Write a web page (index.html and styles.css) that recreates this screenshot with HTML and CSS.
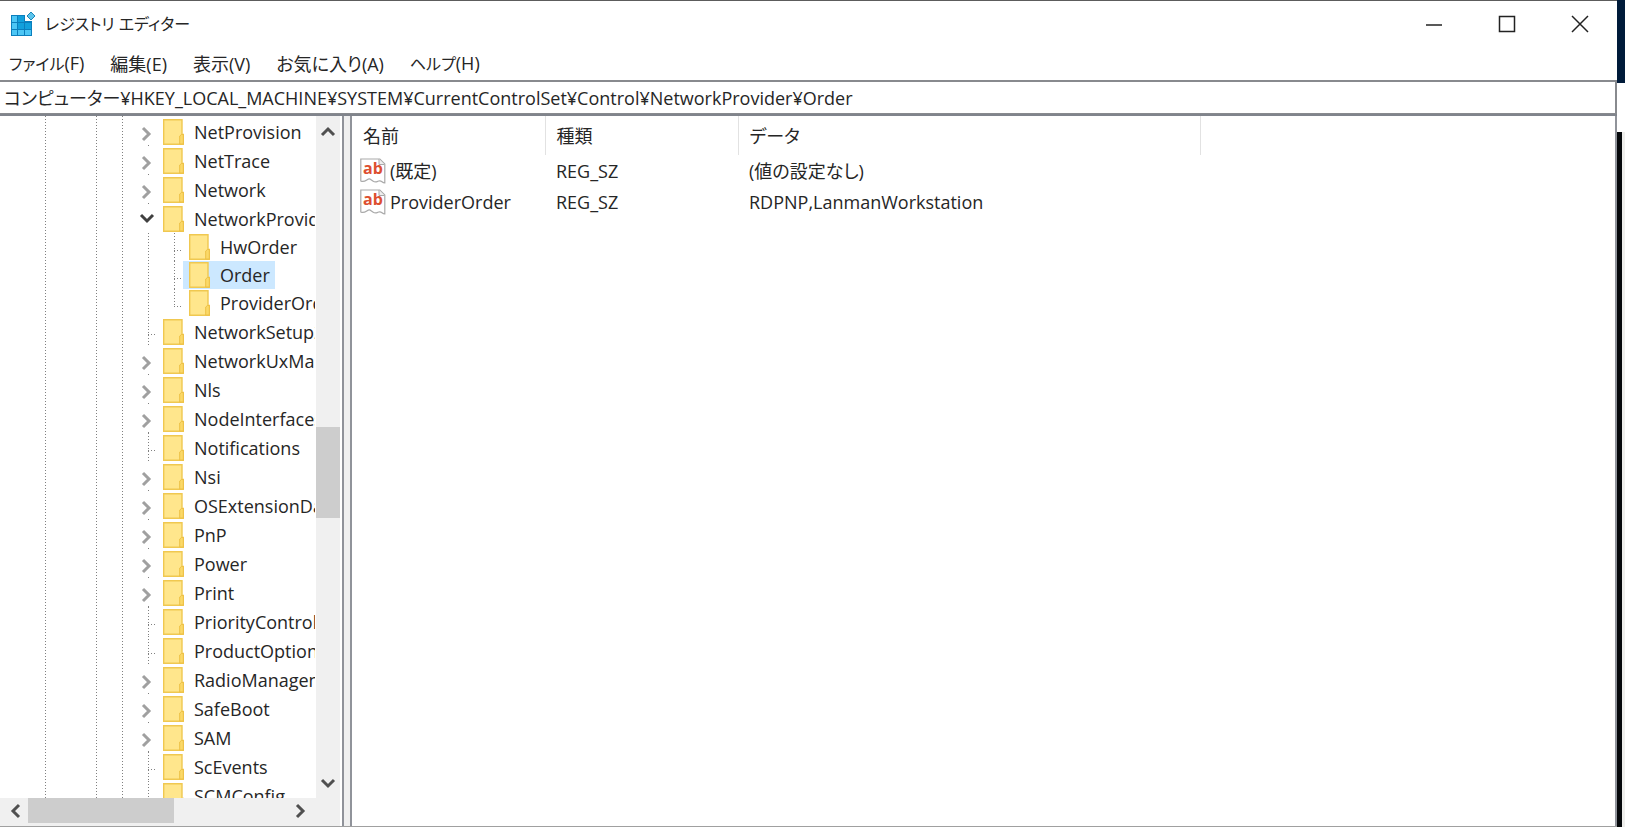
FILE: index.html
```
<!DOCTYPE html>
<html lang="ja">
<head>
    <meta charset="UTF-8">
    <meta name="viewport" content="width=device-width, initial-scale=1.0">
    <title>レジストリ エディター</title>
    <link rel="stylesheet" href="styles.css">
</head>
<body>
    <!-- shared icons -->
    <svg class="sprite" aria-hidden="true">
        <symbol id="folder" viewBox="0 0 21 26">
            <path d="M.7 .7H19V15.500H20.300V25.300H.7z" fill="#ffe68c" stroke="#f0c850" stroke-width="1.400"/>
            <path d="M16.700 25V17L18.500 15.500H20.300V25z" fill="#fbd968" stroke="#edc046"/>
        </symbol>
        <symbol id="chevron" viewBox="0 0 12 16">
            <path d="M2 2l6 6-6 6" fill="none" stroke="currentColor" stroke-width="3"/>
        </symbol>
        <symbol id="string-value" viewBox="0 0 26 26">
            <path d="M.8 23V1h19l5 5v19c-3 0-3-3-6-2s-3 2-6 0-3-3-6-1-4 2-6 1z" fill="#fff" stroke="#a9a9a9" stroke-width="1.200"/>
            <path d="M19 1v5.500h5.500" fill="#eee" stroke="#a9a9a9"/>
            <text x="3" y="16" class="icon-text">ab</text>
        </symbol>
    </svg>

    <main class="window">
        <header class="titlebar">
            <svg class="app-icon" viewBox="0 0 26 26" aria-hidden="true">
                <path d="M1 4h14v6h7v15H1z" fill="#0b7fbd"/>
                <path d="M2 5h5v6H2zM2 12h5v6H2zM2 19h5v5H2zM8 19h6v5H8zM15 19h6v5h-6z" fill="#4cc6f5"/>
                <path d="M8 5h6v6H8zM8 12h6v6H8zM15 12h6v6h-6z" fill="#12a0dc"/>
                <path d="M21 1l4 4-4 4-4-4z" fill="#5cc4ec" stroke="#1a86b8"/>
            </svg>
            <h1 class="title">レジストリ エディター</h1>
            <div class="window-buttons">
                <button type="button" aria-label="最小化"><svg viewBox="0 0 18 18"><path d="M1 10h16"/></svg></button>
                <button type="button" aria-label="最大化"><svg viewBox="0 0 18 18"><path d="M1.500 1.500h15v15h-15z"/></svg></button>
                <button type="button" aria-label="閉じる"><svg viewBox="0 0 18 18"><path d="M1 1l16 16M17 1L1 17"/></svg></button>
            </div>
        </header>

        <nav class="menubar">
            <button type="button"><span class="kana">ファイル</span>(F)</button>
            <button type="button">編集(E)</button>
            <button type="button">表示(V)</button>
            <button type="button">お気に入り(A)</button>
            <button type="button"><span class="kana">ヘルプ</span>(H)</button>
        </nav>

        <input class="address" type="text" aria-label="アドレス" value="コンピューター¥HKEY_LOCAL_MACHINE¥SYSTEM¥CurrentControlSet¥Control¥NetworkProvider¥Order">

        <div class="panes">
            <section class="tree-pane">
                <div class="tree-view">
                    <ul class="tree" id="tree"></ul>
                    <div class="scrollbar vertical">
                        <button type="button" aria-label="上へ"><svg class="up"><use href="#chevron"/></svg></button>
                        <div class="track"><div class="thumb"></div></div>
                        <button type="button" aria-label="下へ"><svg class="down"><use href="#chevron"/></svg></button>
                    </div>
                </div>
                <div class="scrollbar horizontal">
                    <button type="button" aria-label="左へ"><svg class="left"><use href="#chevron"/></svg></button>
                    <div class="track"><div class="thumb"></div></div>
                    <button type="button" aria-label="右へ"><svg><use href="#chevron"/></svg></button>
                </div>
            </section>

            <section class="value-pane">
                <table class="values">
                    <thead>
                        <tr>
                            <th class="col-name">名前</th>
                            <th class="col-type">種類</th>
                            <th class="col-data">データ</th>
                            <td></td>
                        </tr>
                    </thead>
                    <tbody>
                        <tr>
                            <td><span class="value-name"><svg><use href="#string-value"/></svg>(既定)</span></td>
                            <td>REG_SZ</td>
                            <td>(値の設定なし)</td>
                        </tr>
                        <tr>
                            <td><span class="value-name"><svg><use href="#string-value"/></svg>ProviderOrder</span></td>
                            <td>REG_SZ</td>
                            <td>RDPNP,LanmanWorkstation</td>
                        </tr>
                    </tbody>
                </table>
            </section>
        </div>
    </main>
    <div class="desktop">
        <div class="wallpaper"></div>
        <div class="other-window"></div>
    </div>

    <script src="script.js"></script>
</body>
</html>
```
FILE: styles.css
```
* {
    box-sizing: border-box;
}
body {
    margin: 0;
    height: 100vh;
    display: flex;
    overflow: hidden;
    background: #fff;
    color: #262626;
    font-family: "Open Sans", "Noto Sans CJK JP", sans-serif;
    font-size: 18px;
    line-height: 28px;
    font-feature-settings: "palt";
}
button, input {
    font: inherit;
    font-feature-settings: inherit;
    color: inherit;
    border: none;
    padding: 0;
    background: none;
}
.sprite {
    position: absolute;
    width: 0;
    height: 0;
}
.icon-text {
    font: bold 16px "Open Sans", sans-serif;
    fill: #dd5030;
}
.window {
    flex: 1;
    min-width: 0;
    display: flex;
    flex-direction: column;
    border-top: 1px solid #5c5c5c;
}

/* title bar */
.titlebar {
    display: flex;
    align-items: center;
    height: 46px;
    padding-left: 10px;
}
.app-icon {
    width: 26px;
    height: 26px;
    margin-right: 9px;
}
.title {
    margin: 0;
    font-size: 16px;
    font-weight: normal;
}
.window-buttons {
    display: flex;
    margin-left: auto;
    padding-right: 1px;
}
.window-buttons button {
    width: 73px;
    height: 46px;
    display: flex;
    align-items: center;
    justify-content: center;
}
.window-buttons svg {
    width: 18px;
    height: 18px;
    fill: none;
    stroke: #222;
    stroke-width: 1.5;
}
.menubar {
    display: flex;
    gap: 26px;
    height: 33px;
    padding-left: 9px;
}
.kana {
    font-size: 16px;
}
.address {
    height: 34px;
    padding: 0 4px 2px;
    border: solid #888a8e;
    border-width: 2px 2px 1px 0;
    outline: none;
}

/* panes */
.panes {
    flex: 1;
    min-height: 0;
    display: flex;
    border-top: 2px solid #80848c;
    border-bottom: 1px solid #a0a0a0;
    background: #f0f0f0;
}
.tree-pane {
    width: 344px;
    display: flex;
    flex-direction: column;
    border-right: 2px solid #90939a;
    padding-right: 2px;
    background: #fff;
}
.tree-view {
    flex: 1;
    min-height: 0;
    display: flex;
}
.tree, .branch {
    margin: 0;
    padding: 0;
    list-style: none;
}
.tree {
    flex: 1;
    min-width: 0;
    margin-right: 1px;
    padding-top: 1px;
    overflow: hidden;
    --dots: repeating-linear-gradient(#808080 0 1px, transparent 1px 3px);
    --dots-across: repeating-linear-gradient(90deg, #808080 0 1px, transparent 1px 3px);
    background: var(--dots) 45px 0 / 1px 100% no-repeat,
                var(--dots) 96px 0 / 1px 100% no-repeat,
                var(--dots) 122px 0 / 1px 100% no-repeat;
}
.row {
    display: flex;
    height: 29px;
    padding-left: 138px;
}
.branch {
    background: var(--dots) 148px 0 / 1px 100% no-repeat;
}
.branch .row {
    height: 28px;
    padding-left: 164px;
}
.toggle {
    flex: none;
    width: 19px;
    height: 29px;
    display: flex;
    align-items: center;
    justify-content: center;
    padding: 4px 1px 0 0;
    color: #a0a0a0;
    background: linear-gradient(#808080, #808080) 10px 100% / 1px 1px no-repeat;
}
.toggle svg {
    width: 12px;
    height: 16px;
}
.toggle.open {
    padding-top: 0;
    color: #404040;
    background: none;
}
.toggle.open svg {
    transform: rotate(90deg);
}
.leaf {
    flex: none;
    width: 19px;
    background: var(--dots) 10px 0 / 1px 100% no-repeat,
                var(--dots-across) 10px 17px / 9px 1px no-repeat;
}
.branch li:last-child .leaf {
    background-size: 1px 17px, 9px 1px;
}
.entry {
    display: flex;
    align-items: center;
    gap: 10px;
    padding: 0 5px 0 6px;
    white-space: nowrap;
}
.entry svg {
    flex: none;
    width: 21px;
    height: 26px;
}
.entry.selected {
    background: #cce8ff;
}

/* scrollbars */
.scrollbar {
    flex: none;
    display: flex;
    background: #f0f0f0;
}
.scrollbar button {
    flex: none;
    width: 25px;
    height: 25px;
    display: flex;
    align-items: center;
    justify-content: center;
    color: #505050;
}
.scrollbar svg {
    width: 12px;
    height: 16px;
}
.scrollbar .up {
    transform: rotate(-90deg);
}
.scrollbar .down {
    transform: rotate(90deg);
}
.scrollbar .left {
    transform: rotate(180deg);
}
.track {
    flex: 1;
}
.thumb {
    background: #cdcdcd;
}
.vertical {
    width: 24px;
    flex-direction: column;
    align-items: center;
    padding: 2px 0;
}
.vertical .track {
    width: 100%;
    padding-top: 284px;
}
.vertical .thumb {
    height: 91px;
}
.horizontal {
    height: 28px;
    padding: 0 26px 3px 1px;
}
.horizontal button {
    width: 27px;
}
.horizontal .thumb {
    width: 146px;
    height: 25px;
}

/* value list */
.value-pane {
    flex: 1;
    min-width: 0;
    margin-left: 6px;
    border: solid #90939a;
    border-width: 0 2px;
    background: #fff;
}
.values {
    width: 100%;
    table-layout: fixed;
    border-collapse: collapse;
}
.values th, .values td {
    padding: 0 0 0 11px;
    text-align: left;
    font-weight: normal;
    white-space: nowrap;
}
.values thead tr {
    height: 39px;
}
.values th {
    border-right: 1px solid #e2e2e2;
}
.values tbody tr {
    height: 31px;
}
.col-name {
    width: 193px;
}
.col-type {
    width: 193px;
}
.col-data {
    width: 462px;
}
.values tbody td:first-child {
    padding-left: 8px;
}
.value-name {
    display: flex;
    align-items: center;
    gap: 4px;
}
.value-name svg {
    width: 26px;
    height: 26px;
}

/* what shows to the right of the window */
.desktop {
    width: 8px;
    display: flex;
    flex-direction: column;
}
.wallpaper {
    height: 83px;
    background: #001b3a;
}
.other-window {
    flex: 1;
    margin-top: 49px;
    border-left: 5px solid #05080b;
    background: #eeeeec;
}
```
FILE: script.js
```
const keys = [
    { name: 'NetProvision', toggle: true },
    { name: 'NetTrace', toggle: true },
    { name: 'Network', toggle: true },
    { name: 'NetworkProvider', toggle: true, children: [
        { name: 'HwOrder' },
        { name: 'Order', selected: true },
        { name: 'ProviderOrder' }
    ] },
    { name: 'NetworkSetup2' },
    { name: 'NetworkUxManager', toggle: true },
    { name: 'Nls', toggle: true },
    { name: 'NodeInterfaces', toggle: true },
    { name: 'Notifications' },
    { name: 'Nsi', toggle: true },
    { name: 'OSExtensionDatabase', toggle: true },
    { name: 'PnP', toggle: true },
    { name: 'Power', toggle: true },
    { name: 'Print', toggle: true },
    { name: 'PriorityControl' },
    { name: 'ProductOptions' },
    { name: 'RadioManagement', toggle: true },
    { name: 'SafeBoot', toggle: true },
    { name: 'SAM', toggle: true },
    { name: 'ScEvents' },
    { name: 'SCMConfig' }
];

function renderKey(key) {
    const toggle = key.toggle
        ? `<button type="button" class="toggle ${key.children ? 'open' : ''}" aria-label="${key.name}"><svg><use href="#chevron"/></svg></button>`
        : '<span class="leaf"></span>';
    const children = key.children
        ? `<ul class="branch">${key.children.map(renderKey).join('')}</ul>`
        : '';
    return `<li><div class="row">${toggle}<span class="entry ${key.selected ? 'selected' : ''}"><svg><use href="#folder"/></svg>${key.name}</span></div>${children}</li>`;
}

document.getElementById('tree').innerHTML = keys.map(renderKey).join('');
```
